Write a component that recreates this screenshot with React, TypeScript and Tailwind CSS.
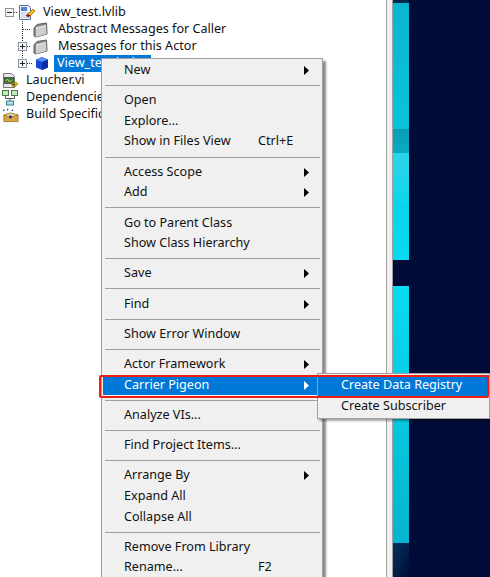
import React from 'react';

type MenuEntry = { label?: string; sub?: boolean; hint?: string; active?: boolean; sep?: boolean };

const menu: MenuEntry[] = [
  { label: 'New', sub: true },
  { sep: true },
  { label: 'Open' },
  { label: 'Explore...' },
  { label: 'Show in Files View', hint: 'Ctrl+E' },
  { sep: true },
  { label: 'Access Scope', sub: true },
  { label: 'Add', sub: true },
  { sep: true },
  { label: 'Go to Parent Class' },
  { label: 'Show Class Hierarchy' },
  { sep: true },
  { label: 'Save', sub: true },
  { sep: true },
  { label: 'Find', sub: true },
  { sep: true },
  { label: 'Show Error Window' },
  { sep: true },
  { label: 'Actor Framework', sub: true },
  { label: 'Carrier Pigeon', sub: true, active: true },
  { sep: true },
  { label: 'Analyze VIs...' },
  { sep: true },
  { label: 'Find Project Items...' },
  { sep: true },
  { label: 'Arrange By', sub: true },
  { label: 'Expand All' },
  { label: 'Collapse All' },
  { sep: true },
  { label: 'Remove From Library' },
  { label: 'Rename...', hint: 'F2' },
];

const Expander = ({ x, y, open }: { x: number; y: number; open?: boolean }) => (
  <g>
    <rect x={x + 0.5} y={y + 0.5} width="8" height="8" fill="#f4f4f0" stroke="#8a95a8" />
    <path d={`M${x + 2} ${y + 4.5}h5`} stroke="#222" />
    {!open && <path d={`M${x + 4.5} ${y + 2}v5`} stroke="#222" />}
  </g>
);

// grey folder, drawn leaning a little like the LabVIEW one
const Folder = () => (
  <svg width="15" height="16" viewBox="0 0 15 16">
    <path d="M1 6L4 2.500 13.500 1 14 12 3 15 1 14z" fill="#8c8c8c" stroke="#5c5c5c" />
    <path d="M3 6l10-2.500.5 8.500L3 15z" fill="#cfcfcf" />
    <path d="M3 6l10-2.500" stroke="#f2f2f2" />
  </svg>
);

const Cube = () => (
  <svg width="14" height="15" viewBox="0 0 14 15">
    <path d="M7 1l6 2.500v8L7 14l-6-2.500v-8z" fill="#1248d8" />
    <path d="M7 1l6 2.500L7 6 1 3.500z" fill="#5a90f5" />
    <path d="M7 6l6-2.500v8L7 14z" fill="#0a2ea8" />
  </svg>
);

const LibIcon = () => (
  <svg width="18" height="17" viewBox="0 0 18 17">
    <path d="M1.500 1.500h9l2 2V15.500h-11z" fill="#eef2fb" stroke="#5a6a9a" />
    <path d="M3 3h6v4H3z" fill="#5b7fd4" />
    <path d="M3 8h8v6H3z" fill="#d5def2" />
    <path d="M10 10l5-5 2 2-5 5-3 1z" fill="#f2c21a" stroke="#8a5a00" strokeWidth="0.7" />
    <path d="M8 11.500h4M10 9.500v4" stroke="#b00000" />
  </svg>
);

const ViIcon = () => (
  <svg width="16" height="17" viewBox="0 0 16 17">
    <path d="M1.500 1.500h8l3 3v11h-11z" fill="#e8e8e8" stroke="#777" />
    <rect x="2.500" y="5.500" width="9" height="6" fill="#3d7a3d" stroke="#222" strokeWidth="0.6" />
    <path d="M3.500 9l2-2 2 3 2-2" stroke="#e7e24a" fill="none" strokeWidth="0.8" />
    <path d="M10 11l4-1 2 2-3 3-3-1z" fill="#f0d020" stroke="#6a5200" strokeWidth="0.6" />
    <path d="M10.500 12.500h3M12 11v3" stroke="#222" strokeWidth="0.8" />
  </svg>
);

const DepsIcon = () => (
  <svg width="16" height="17" viewBox="0 0 16 17">
    <rect x="0.500" y="1.500" width="6" height="5" fill="#c5e8c0" stroke="#4a7a4a" />
    <rect x="9.500" y="1.500" width="6" height="5" fill="#c5e8c0" stroke="#4a7a4a" />
    <path d="M3.500 7v2.500h9V7M8 9.500V12" stroke="#555" fill="none" />
    <rect x="4.500" y="12" width="7" height="4" fill="#9fe3ea" stroke="#3f7f88" />
  </svg>
);

const BuildIcon = () => (
  <svg width="18" height="16" viewBox="0 0 18 16">
    <path d="M1 3l1-1 1 1-1 1zM5 2.500l1-1 1 1-1 1zM10 3l1-1 1 1-1 1z" fill="#1d2fb8" />
    <path d="M2 8l7-2 8 2v7H2z" fill="#d9a441" stroke="#7a5518" strokeWidth="0.7" />
    <path d="M2 8l7 2 8-2-8-2z" fill="#f4dc92" stroke="#7a5518" strokeWidth="0.5" />
    <path d="M9 8l2 2-2 2-2-2z" fill="#1d2fb8" />
  </svg>
);

const TreeRow = ({
  gutter,
  icon,
  label,
  selected,
}: {
  gutter: React.ReactNode;
  icon: React.ReactNode;
  label: string;
  selected?: boolean;
}) => (
  <div className="flex h-[17px] items-center whitespace-nowrap">
    {gutter}
    {icon}
    <span className={selected ? 'ml-[4px] flex h-[17px] w-[97px] items-center bg-[#0078d7] pl-[3px] text-white' : 'ml-[4px] pl-[3px] text-[#111]'}>
      {label}
    </span>
  </div>
);

const dots = { stroke: '#333', strokeDasharray: '1 1' };

const Tree = () => (
  <div className="pt-[4px] text-[12.600px]">
    <TreeRow
      gutter={
        <svg width="18" height="17" className="shrink-0">
          <Expander x={5} y={4} open />
          <path d="M14 8.500h4" {...dots} />
        </svg>
      }
      icon={<LibIcon />}
      label="View_test.lvlib"
      selected={false}
    />
    <TreeRow
      gutter={
        <svg width="33" height="17" className="shrink-0">
          <path d="M22.500 0v17M23 8.500h7" {...dots} />
        </svg>
      }
      icon={<span className="flex w-[18px] shrink-0"><Folder /></span>}
      label="Abstract Messages for Caller"
    />
    <TreeRow
      gutter={
        <svg width="33" height="17" className="shrink-0">
          <path d="M22.500 0v4M22.500 13v4M27 8.500h3" {...dots} />
          <Expander x={18} y={4} />
        </svg>
      }
      icon={<span className="flex w-[18px] shrink-0"><Folder /></span>}
      label="Messages for this Actor"
    />
    <TreeRow
      gutter={
        <svg width="35" height="17" className="shrink-0">
          <path d="M22.500 0v4M27 8.500h5" {...dots} />
          <Expander x={18} y={4} />
        </svg>
      }
      icon={<span className="flex w-[15px] shrink-0"><Cube /></span>}
      label="View_test.lvclass"
      selected
    />
    <TreeRow gutter={<span className="w-[2px] shrink-0" />} icon={<span className="flex w-[17px] shrink-0"><ViIcon /></span>} label="Laucher.vi" />
    <TreeRow gutter={<span className="w-[2px] shrink-0" />} icon={<span className="flex w-[17px] shrink-0"><DepsIcon /></span>} label="Dependencies" />
    <TreeRow gutter={<span className="w-[2px] shrink-0" />} icon={<span className="flex w-[17px] shrink-0"><BuildIcon /></span>} label="Build Specifications" />
  </div>
);

const Arrow = ({ light }: { light?: boolean }) => (
  <svg width="5" height="9" viewBox="0 0 5 9" className="shrink-0">
    <path d="M0 0l5 4.500L0 9z" fill={light ? '#fff' : '#000'} />
  </svg>
);

const ContextMenu = () => (
  <div className="absolute left-[101px] top-[58px] h-[530px] w-[222px] border border-[#a0a0a0] bg-[#f0f0f0] pl-[1px] pt-[1px] text-[12.600px] text-[#111] shadow-[3px_3px_2px_rgba(0,0,0,0.45)]">
    {menu.map((m, i) =>
      m.sep ? (
        <div key={i} className="flex h-[9.500px] items-center px-[2px]">
          <div className="h-px w-full bg-[#a0a0a0]" />
        </div>
      ) : (
        <div
          key={i}
          className={`flex h-[20.700px] items-center pl-[21px] pr-[13px] ${m.active ? 'bg-[#0078d7] text-white' : ''}`}
        >
          <span className="w-[134px] whitespace-nowrap">{m.label}</span>
          <span className="flex-1 whitespace-nowrap">{m.hint}</span>
          {m.sub && <Arrow light={m.active} />}
        </div>
      ),
    )}
  </div>
);

const SubMenu = () => (
  <div className="absolute left-[317px] top-[373px] w-[173px] border border-[#a0a0a0] bg-[#f0f0f0] py-[1px] text-[12.600px] text-[#111] shadow-[2px_2px_2px_rgba(0,0,0,0.35)]">
    <div className="flex h-[21px] items-center bg-[#0078d7] pl-[23px] text-white">Create Data Registry</div>
    <div className="flex h-[21px] items-center pl-[23px]">Create Subscriber</div>
  </div>
);

const Stripe = () => (
  <div className="flex w-[16px] flex-col">
    <div className="h-[3px] bg-[#04244e]" />
    <div className="h-[126px] bg-gradient-to-b from-[#09b6d2] to-[#0ac2dc]" />
    <div className="h-[24px] bg-gradient-to-b from-[#0a9db6] to-[#0aa9c2]" />
    <div className="h-[107px] bg-gradient-to-b from-[#2ad4e8] via-[#06d6ec] to-[#06daf0]" />
    <div className="h-[26px] bg-[#000b37]" />
    <div className="h-[257px] bg-gradient-to-b from-[#07dcf0] via-[#06c8e0] to-[#05b4d0]" />
    <div className="flex-1 bg-gradient-to-br from-[#04305a] via-[#03204c] to-[#000b37]" />
  </div>
);

export default function App() {
  return (
    <div className="relative flex h-[577px] w-[490px] overflow-hidden bg-white font-['Noto_Sans','Open_Sans',sans-serif]">
      <div className="w-[386px] shrink-0">
        <Tree />
      </div>
      <div className="w-[7px] shrink-0 border-x border-[#a0a0a0] bg-[#f0f0f0]" />
      <div className="flex flex-1 bg-[#000b37]">
        <Stripe />
      </div>
      <ContextMenu />
      <SubMenu />
      <div className="absolute left-[99px] top-[375px] h-[23px] w-[390px] rounded-[2px] border-[2px] border-[#f01c10]" />
    </div>
  );
}
